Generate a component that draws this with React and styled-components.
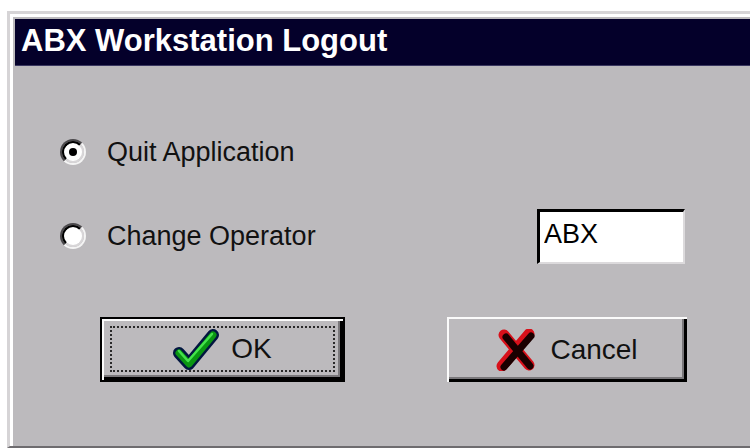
import React, { useState } from 'react';
import styled, { createGlobalStyle } from 'styled-components';

const face = '#bcbabd';

const GlobalStyle = createGlobalStyle`
    html, body {
        margin: 0;
        padding: 0;
        background: #fff;
        overflow: hidden;
    }
    body {
        font-family: "Liberation Sans", Arial, sans-serif;
    }
`;

// outer frame: light gray edge, then white bevel
const Frame = styled.div`
    box-sizing: border-box;
    margin: 11px 0 0 7px;
    width: 770px;
    height: 437px;
    border-top: 3px solid #d6d4d6;
    border-left: 3px solid #d6d4d6;
    border-bottom: 2px solid #6e6c6f;
`;

const Inner = styled.div`
    box-sizing: border-box;
    height: 100%;
    border-top: 3px solid #fff;
    border-left: 3px solid #fff;
    background: ${face};
    padding: 2px 0 0 2px;
    display: flex;
    flex-direction: column;
`;

const TitleBar = styled.div`
    height: 47px;
    background: #04002a;
    color: #fff;
    font-weight: 700;
    font-size: 31px;
    line-height: 43px;
    padding-left: 6px;
    white-space: nowrap;
    box-shadow: inset 0 -1px #3a3760;
`;

const Body = styled.div`
    display: flex;
    flex-direction: column;
    padding: 58px 0 0 45px;
`;

const OptionRow = styled.label`
    display: flex;
    align-items: center;
    width: 625px;
    height: 56px;
    margin-top: ${p => p.$gap || 0}px;
    font-size: 27px;
    color: #111;
    cursor: default;
`;

const RadioWrap = styled.span`
    position: relative;
    display: flex;
    align-items: center;
    justify-content: center;
`;

const RadioDot = styled.span`
    box-sizing: border-box;
    width: 26px;
    height: 26px;
    border-radius: 50%;
    border: 2px solid;
    border-color: #4a484b #f4f4f4 #f4f4f4 #4a484b;
    display: flex;
    align-items: center;
    justify-content: center;
    margin-right: 21px;
    flex-shrink: 0;

    &::before {
        content: '';
        box-sizing: border-box;
        width: 22px;
        height: 22px;
        border-radius: 50%;
        border: 2px solid;
        border-color: #000 #d8d6d8 #d8d6d8 #000;
        background: #fff;
    }

    &::after {
        content: '';
        position: absolute;
        width: 8px;
        height: 8px;
        border-radius: 50%;
        background: #000;
        display: ${p => (p.$on ? 'block' : 'none')};
    }
`;

const TextBox = styled.input`
    box-sizing: border-box;
    margin-left: auto;
    width: 148px;
    height: 55px;
    background: #fff;
    border-style: solid;
    border-width: 3px 2px 2px 3px;
    border-color: #000 #dcdadc #dcdadc #000;
    font-family: "Liberation Sans", Arial, sans-serif;
    font-size: 27px;
    color: #000;
    padding: 0 0 4px 4px;
    outline: none;
`;

const ButtonRow = styled.div`
    display: flex;
    gap: 102px;
    margin-top: 53px;
    padding-left: 40px;
`;

const Button = styled.button`
    box-sizing: border-box;
    width: ${p => p.$w}px;
    height: 65px;
    background: ${face};
    border: ${p => (p.$default ? '2px solid #000' : 'none')};
    box-shadow: inset 2px 2px #fbfbfb, inset -3px -3px #000, inset -5px -5px #7a787b;
    padding: ${p => (p.$default ? '7px 8px 8px 8px' : '0')};
    font-family: "Liberation Sans", Arial, sans-serif;
    font-size: 28px;
    color: #111;
    cursor: default;
`;

const FocusRing = styled.span`
    box-sizing: border-box;
    height: 100%;
    display: flex;
    align-items: center;
    justify-content: center;
    gap: ${p => p.$gap}px;
    border: ${p => (p.$show ? '2px dotted #2a2a2a' : '2px solid transparent')};
`;

const CheckIcon = () => (
    <svg width="46" height="44" viewBox="0 0 46 44">
        <g fill="none" strokeLinecap="round" strokeLinejoin="round">
            <polyline points="6,26 16,37 40,8" stroke="#021640" strokeWidth="12" />
            <polyline points="6,26 16,37 40,8" stroke="#0a9612" strokeWidth="7" />
            <polyline points="6,24 15,34 39,7" stroke="#44e24c" strokeWidth="2.5" />
        </g>
    </svg>
);

const CrossIcon = () => (
    <svg width="40" height="42" viewBox="0 0 40 42">
        <g fill="none" strokeLinecap="round">
            <path d="M8 6 L33 36" stroke="#d8101a" strokeWidth="11" />
            <path d="M33 5 L6 37" stroke="#d8101a" strokeWidth="11" />
            <path d="M10 8 L34 37" stroke="#1a0000" strokeWidth="7" />
            <path d="M35 7 L8 38" stroke="#1a0000" strokeWidth="7" />
        </g>
    </svg>
);

export default function App() {
    const [mode, setMode] = useState('quit');
    const [operator, setOperator] = useState('ABX');

    return (
        <>
            <GlobalStyle />
            <Frame>
                <Inner>
                    <TitleBar>ABX Workstation Logout</TitleBar>
                    <Body>
                        <OptionRow onClick={() => setMode('quit')}>
                            <RadioWrap>
                                <RadioDot $on={mode === 'quit'} />
                            </RadioWrap>
                            Quit Application
                        </OptionRow>
                        <OptionRow $gap={28} onClick={() => setMode('change')}>
                            <RadioWrap>
                                <RadioDot $on={mode === 'change'} />
                            </RadioWrap>
                            Change Operator
                            <TextBox value={operator} onChange={e => setOperator(e.target.value)} />
                        </OptionRow>
                        <ButtonRow>
                            <Button $w={245} $default>
                                <FocusRing $show $gap={12}>
                                    <CheckIcon />
                                    OK
                                </FocusRing>
                            </Button>
                            <Button $w={240}>
                                <FocusRing $gap={14}>
                                    <CrossIcon />
                                    Cancel
                                </FocusRing>
                            </Button>
                        </ButtonRow>
                    </Body>
                </Inner>
            </Frame>
        </>
    );
}
